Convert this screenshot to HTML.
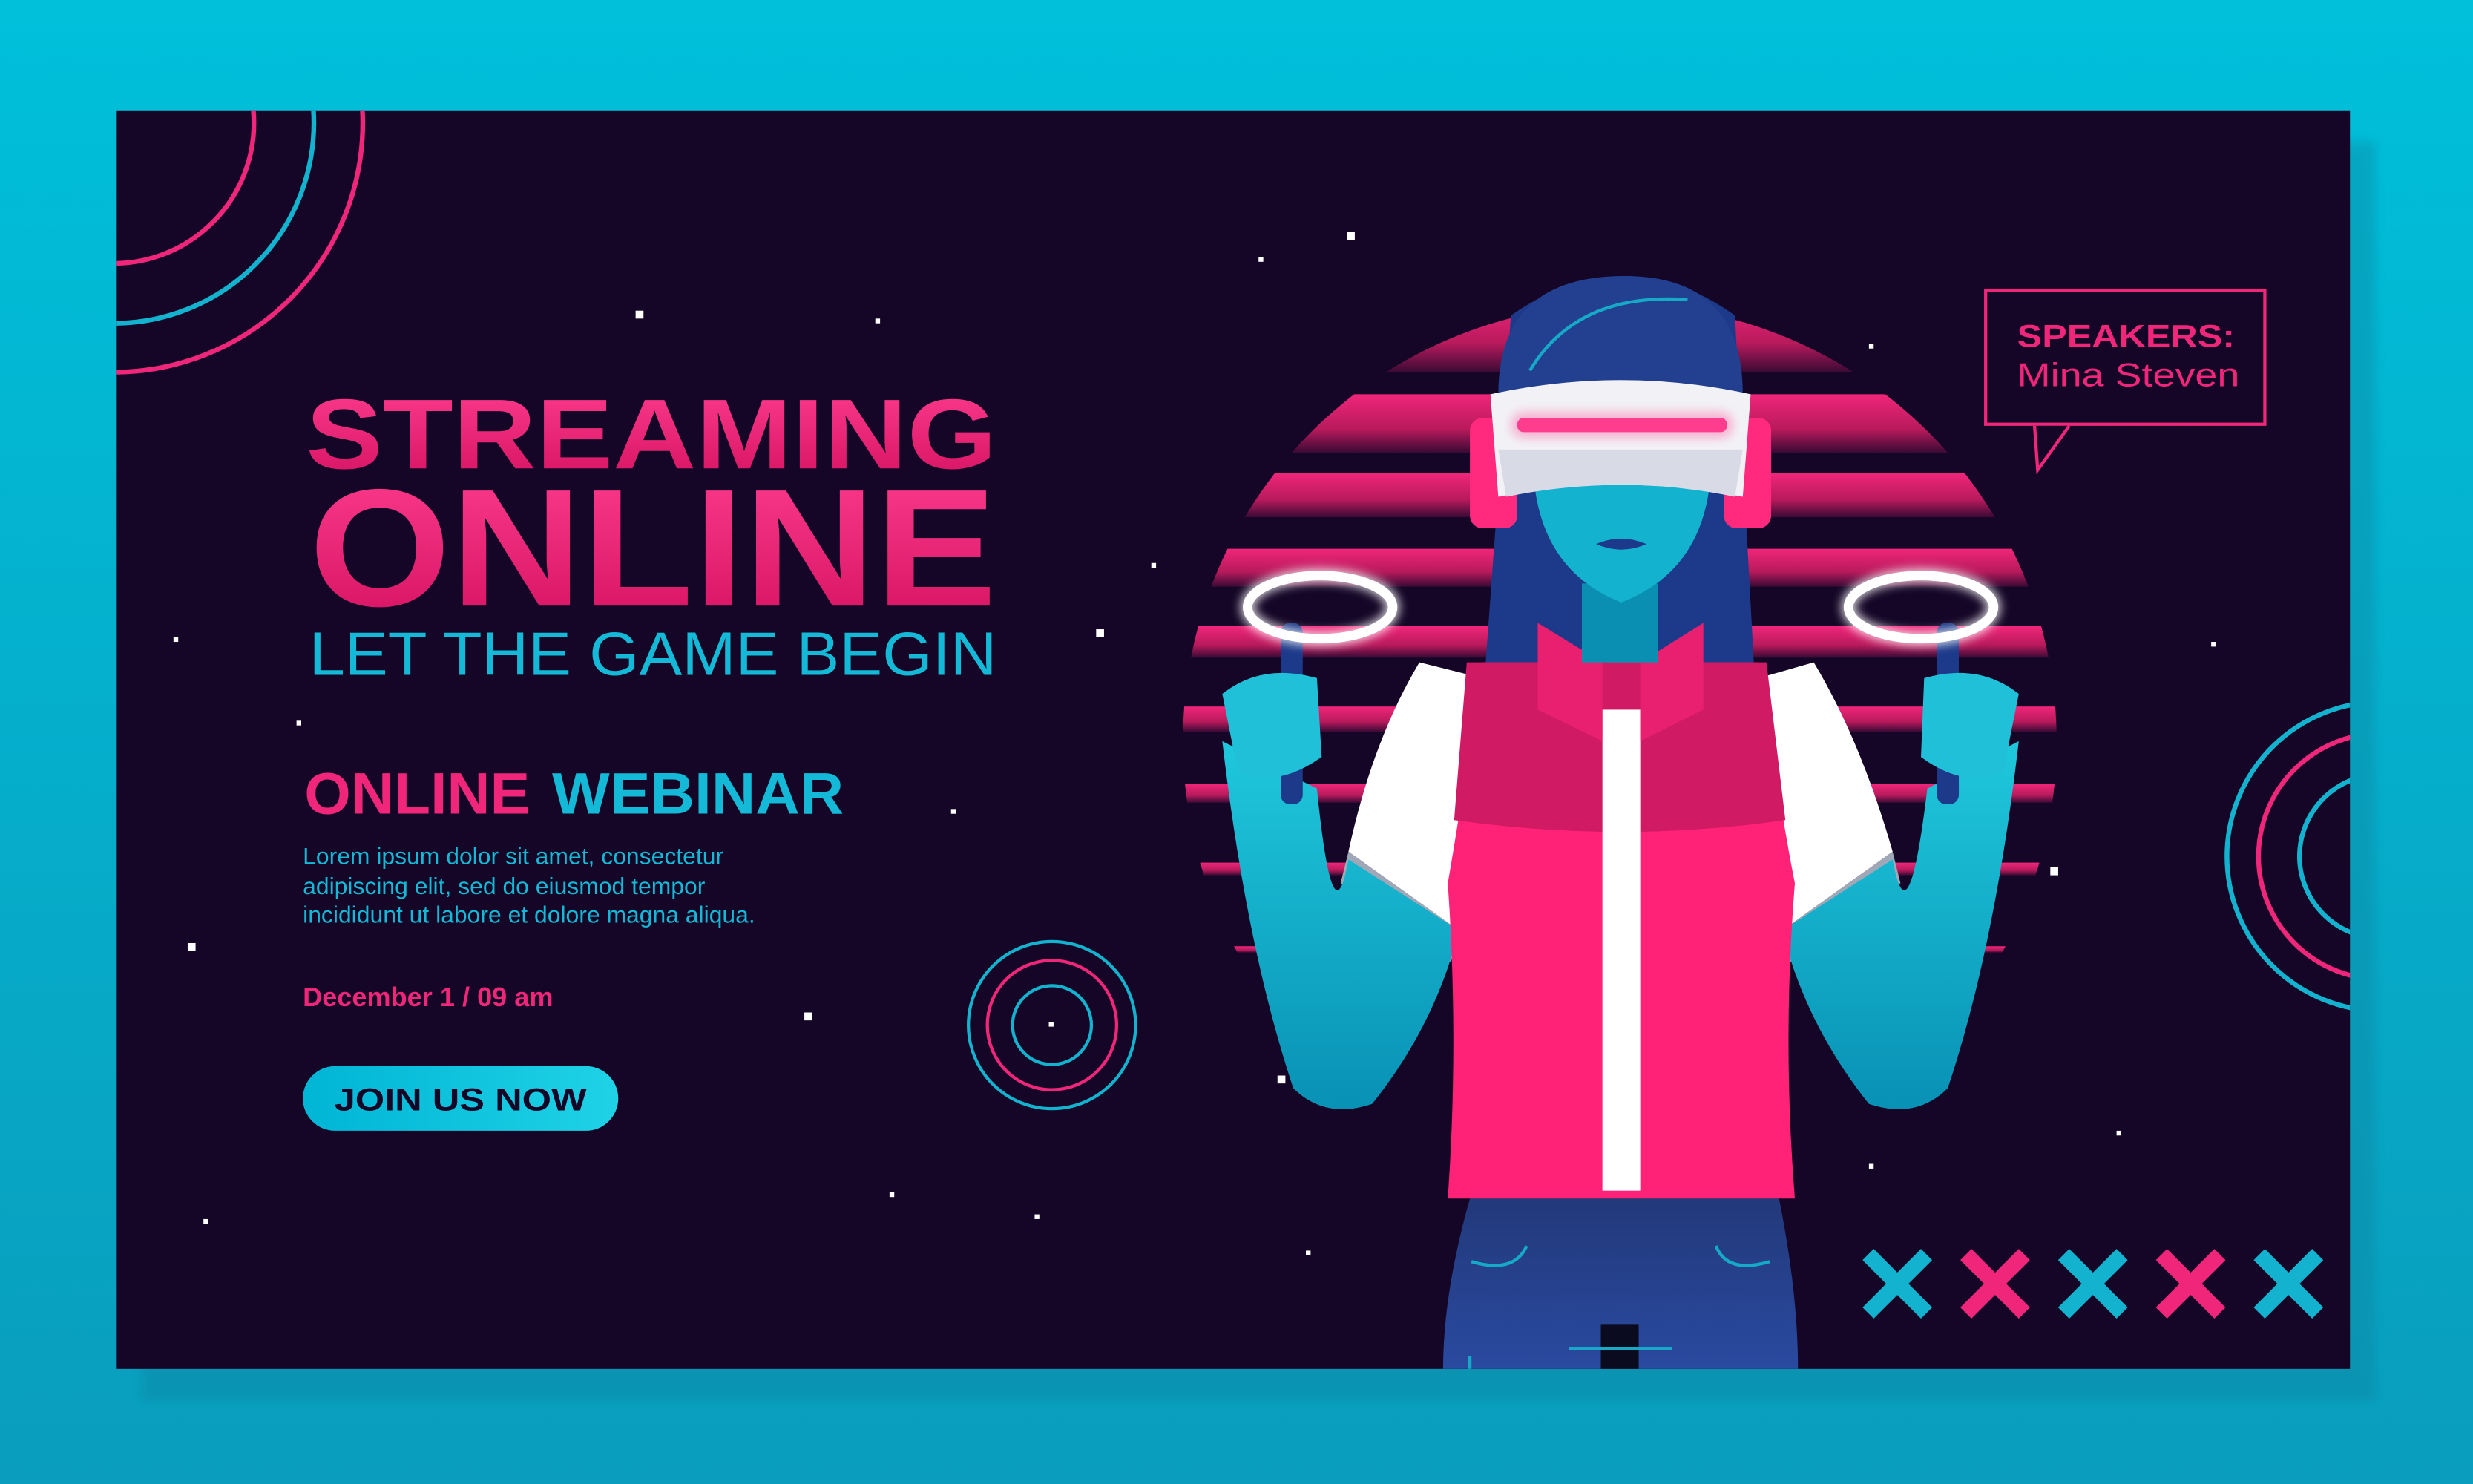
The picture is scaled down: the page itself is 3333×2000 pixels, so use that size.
<!DOCTYPE html>
<html><head><meta charset="utf-8"><style>
html,body{margin:0;padding:0;width:3333px;height:2000px;overflow:hidden;background:#00bcd8}
svg{display:block}
text{font-family:"Liberation Sans",sans-serif}
</style></head><body>
<svg width="3333" height="2000" viewBox="0 0 1568 941" preserveAspectRatio="none" xmlns="http://www.w3.org/2000/svg">
<defs>
<linearGradient id="bg" x1="0" y1="0" x2="0" y2="1"><stop offset="0" stop-color="#00c0da"/><stop offset="1" stop-color="#0a9dbd"/></linearGradient>
<linearGradient id="pk" x1="0" y1="0" x2="0" y2="1"><stop offset="0" stop-color="#ff3d8f"/><stop offset="1" stop-color="#d3105f"/></linearGradient>
<linearGradient id="tl" x1="0" y1="0" x2="1" y2="0"><stop offset="0" stop-color="#1aa9c9" stop-opacity="0"/><stop offset="0.4" stop-color="#1790b8"/><stop offset="1" stop-color="#1a98c0"/></linearGradient>
<linearGradient id="pl" x1="0" y1="0" x2="1" y2="0"><stop offset="0" stop-color="#e0206a"/><stop offset="0.6" stop-color="#b01a5a"/><stop offset="1" stop-color="#5a1040" stop-opacity="0"/></linearGradient>
<linearGradient id="sun" x1="0" y1="0" x2="0" y2="1"><stop offset="0" stop-color="#f0267a"/><stop offset="0.6" stop-color="#b81a5c"/><stop offset="1" stop-color="#3a0a35"/></linearGradient>
<linearGradient id="btn" x1="0" y1="0" x2="1" y2="0"><stop offset="0" stop-color="#00b5d5"/><stop offset="1" stop-color="#1fd2e6"/></linearGradient>
<linearGradient id="arm" x1="0" y1="0" x2="0" y2="1"><stop offset="0" stop-color="#1fc8dc"/><stop offset="1" stop-color="#0891b5"/></linearGradient>
<linearGradient id="pants" x1="0" y1="0" x2="0" y2="1"><stop offset="0" stop-color="#22397a"/><stop offset="1" stop-color="#2a4aa0"/></linearGradient>
<clipPath id="ban"><rect x="74" y="70" width="1416" height="798"/></clipPath>
<clipPath id="sunc"><circle cx="1027" cy="470" r="277"/></clipPath>
<filter id="glow" x="-50%" y="-50%" width="200%" height="200%"><feGaussianBlur stdDeviation="3"/></filter>
</defs>
<rect width="1568" height="941" fill="url(#bg)"/>
<rect x="90" y="90" width="1416" height="798" fill="#0a7f9c" opacity="0.35" filter="url(#glow)"/>
<rect x="74" y="70" width="1416" height="798" fill="#150627"/>
<g clip-path="url(#ban)">
 <g stroke="url(#tl)" stroke-width="2.2">
  <line x1="330" y1="86" x2="1490" y2="86"/><line x1="330" y1="91.5" x2="1490" y2="91.5"/><line x1="330" y1="97" x2="1490" y2="97"/><line x1="330" y1="102.5" x2="1490" y2="102.5"/><line x1="330" y1="108" x2="1490" y2="108"/><line x1="330" y1="113.5" x2="1490" y2="113.5"/><line x1="330" y1="119" x2="1490" y2="119"/><line x1="330" y1="124.5" x2="1490" y2="124.5"/><line x1="330" y1="130" x2="1490" y2="130"/>
 </g>
 <g stroke="url(#pl)" stroke-width="2.2">
  <line x1="74" y1="777" x2="910" y2="777"/><line x1="74" y1="782.5" x2="910" y2="782.5"/><line x1="74" y1="788" x2="910" y2="788"/><line x1="74" y1="793.5" x2="910" y2="793.5"/><line x1="74" y1="799" x2="910" y2="799"/><line x1="74" y1="804.5" x2="910" y2="804.5"/><line x1="74" y1="810" x2="910" y2="810"/><line x1="74" y1="815.5" x2="910" y2="815.5"/><line x1="74" y1="821" x2="910" y2="821"/>
 </g>
 <g fill="none" stroke-width="3">
  <circle cx="72" cy="78" r="89" stroke="#f0267a"/>
  <circle cx="72" cy="78" r="127" stroke="#13b3d0"/>
  <circle cx="72" cy="78" r="158" stroke="#f0267a"/>
  <circle cx="1510" cy="543" r="52" stroke="#13b3d0"/>
  <circle cx="1510" cy="543" r="78" stroke="#f0267a"/>
  <circle cx="1510" cy="543" r="98" stroke="#13b3d0"/>
 </g>
 <g fill="none" stroke-width="2">
  <circle cx="667" cy="650" r="53" stroke="#13b3d0"/>
  <circle cx="667" cy="650" r="41" stroke="#f0267a"/>
  <circle cx="667" cy="650" r="25" stroke="#13b3d0"/>
 </g>
 <rect x="665" y="648" width="3" height="3" fill="#fff"/>
 <!-- sun -->
 <g clip-path="url(#sunc)" fill="url(#sun)">
  <rect x="700" y="190" width="660" height="46"/>
  <rect x="700" y="250" width="660" height="37"/>
  <rect x="700" y="300" width="660" height="28"/>
  <rect x="700" y="348" width="660" height="24"/>
  <rect x="700" y="397" width="660" height="20"/>
  <rect x="700" y="448" width="660" height="16"/>
  <rect x="700" y="497" width="660" height="12"/>
  <rect x="700" y="547" width="660" height="8"/>
  <rect x="700" y="600" width="660" height="4"/>
 </g>
 <!-- stars -->
 <g fill="#fff">
  <rect x="854" y="147" width="5" height="5"/><rect x="403" y="197" width="5" height="5"/><rect x="555" y="202" width="3" height="3"/><rect x="798" y="163" width="3" height="3"/>
  <rect x="695" y="399" width="5" height="5"/><rect x="110" y="404" width="3" height="3"/><rect x="188" y="457" width="3" height="3"/><rect x="603" y="513" width="3" height="3"/>
  <rect x="119" y="598" width="5" height="5"/><rect x="510" y="642" width="5" height="5"/><rect x="730" y="357" width="3" height="3"/><rect x="1185" y="218" width="3" height="3"/>
  <rect x="1402" y="407" width="3" height="3"/><rect x="1300" y="550" width="5" height="5"/><rect x="1342" y="717" width="3" height="3"/><rect x="1185" y="738" width="3" height="3"/>
  <rect x="810" y="682" width="5" height="5"/><rect x="656" y="770" width="3" height="3"/><rect x="828" y="793" width="3" height="3"/><rect x="564" y="756" width="3" height="3"/><rect x="129" y="773" width="3" height="3"/><rect x="1128" y="629" width="3" height="3"/>
 </g>
 <!-- figure -->
 <path d="M932 760 Q915 820 915 868 L1140 868 Q1140 820 1128 760 Z" fill="url(#pants)"/>
 <path d="M933 800 Q960 808 968 790 M1122 800 Q1095 808 1088 790 M932 860 L932 868 M1120 860" stroke="#16a9c8" stroke-width="2" fill="none"/>
 <rect x="1015" y="840" width="24" height="28" fill="#0a0b1e"/>
 <line x1="995" y1="855" x2="1060" y2="855" stroke="#16a9c8" stroke-width="2"/>
 <!-- hair back -->
 <path d="M958 200 Q1030 150 1100 200 L1112 420 L942 420 Z" fill="#1d3a8a"/>
 <!-- sleeves -->
 <path d="M900 420 Q870 470 855 540 L925 590 L940 430 Z" fill="#ffffff"/>
 <path d="M1150 420 Q1180 470 1200 540 L1130 590 L1115 430 Z" fill="#ffffff"/>
 <path d="M855 540 L925 590 L920 610 L850 560 Z" fill="#a0a8b8"/>
 <path d="M1200 540 L1130 590 L1135 610 L1205 560 Z" fill="#a0a8b8"/>
 <!-- arms -->
 <path d="M775 470 Q790 600 820 690 Q840 710 870 700 Q910 650 925 590 L855 545 Q845 600 835 500 Z" fill="url(#arm)"/>
 <path d="M1280 470 Q1265 600 1235 690 Q1215 710 1185 700 Q1145 650 1130 590 L1200 545 Q1210 600 1222 500 Z" fill="url(#arm)"/>
 <!-- hands/controllers -->
 <rect x="812" y="395" width="14" height="115" rx="6" fill="#1d3a8a"/>
 <rect x="1228" y="395" width="14" height="115" rx="6" fill="#1d3a8a"/>
 <path d="M775 440 Q800 420 835 430 L838 480 Q810 500 785 490 Z" fill="#1fc0d8"/>
 <path d="M1280 440 Q1255 420 1220 430 L1218 480 Q1245 500 1270 490 Z" fill="#1fc0d8"/>
 <ellipse cx="837" cy="385" rx="46" ry="20" fill="none" stroke="#fff" stroke-width="9" filter="url(#glow)" opacity="0.8"/>
 <ellipse cx="837" cy="385" rx="46" ry="20" fill="none" stroke="#fff" stroke-width="6"/>
 <ellipse cx="1218" cy="385" rx="46" ry="20" fill="none" stroke="#fff" stroke-width="9" filter="url(#glow)" opacity="0.8"/>
 <ellipse cx="1218" cy="385" rx="46" ry="20" fill="none" stroke="#fff" stroke-width="6"/>
 <!-- torso -->
 <path d="M940 420 L1115 420 Q1130 520 1138 560 Q1130 660 1138 760 L918 760 Q925 660 918 560 Q925 520 940 420 Z" fill="#ff2277"/>
 <path d="M930 420 L1120 420 L1132 520 Q1028 535 922 520 Z" fill="#d01a64"/>
 <rect x="1016" y="450" width="24" height="305" fill="#ffffff"/>
 <path d="M975 395 L1016 420 L1016 470 L975 450 Z M1080 395 L1040 420 L1040 470 L1080 450 Z" fill="#e8206f"/>
 <!-- neck & face -->
 <rect x="1003" y="370" width="48" height="50" fill="#0a8fb2"/>
 <path d="M972 290 L1085 290 Q1085 360 1028 382 Q972 360 972 290 Z" fill="#13b3d0"/>
 <path d="M1012 345 Q1028 338 1044 345 Q1028 352 1012 345 Z" fill="#1d3a8a"/>
 <!-- hair top -->
 <path d="M950 250 Q950 175 1030 175 Q1105 175 1105 250 Z" fill="#22408f"/>
 <path d="M970 235 Q1000 185 1070 190" stroke="#16a9c8" stroke-width="2" fill="none"/>
 <!-- headset -->
 <rect x="932" y="265" width="30" height="70" rx="8" fill="#ff2a7d"/>
 <rect x="1093" y="265" width="30" height="70" rx="8" fill="#ff2a7d"/>
 <path d="M945 250 Q1028 232 1110 250 L1105 315 Q1028 300 950 315 Z" fill="#f2f2f6"/>
 <path d="M950 285 L1105 285 L1100 315 Q1028 300 955 315 Z" fill="#d8dae5"/>
 <rect x="962" y="265" width="133" height="9" rx="4" fill="#ff3d8f"/>
 <rect x="958" y="261" width="141" height="17" rx="8" fill="#ff3d8f" opacity="0.35" filter="url(#glow)"/>
 <!-- X marks -->
 <g stroke-width="10" stroke-linecap="square">
  <path d="M1188 799 L1218 829 M1218 799 L1188 829" stroke="#13b3d0"/>
  <path d="M1250 799 L1280 829 M1280 799 L1250 829" stroke="#f0267a"/>
  <path d="M1312 799 L1342 829 M1342 799 L1312 829" stroke="#13b3d0"/>
  <path d="M1374 799 L1404 829 M1404 799 L1374 829" stroke="#f0267a"/>
  <path d="M1436 799 L1466 829 M1466 799 L1436 829" stroke="#13b3d0"/>
 </g>
</g>
<!-- speaker box -->
<rect x="1259" y="184" width="177" height="85" fill="none" stroke="#f0267a" stroke-width="2"/>
<path d="M1290 270 L1292 298 L1312 270" fill="#150627" stroke="#f0267a" stroke-width="2"/>
<text x="1279" y="220" font-size="20" font-weight="bold" fill="#f0267a" textLength="138" lengthAdjust="spacingAndGlyphs">SPEAKERS:</text>
<text x="1279" y="245" font-size="21" fill="#f0267a" textLength="141" lengthAdjust="spacingAndGlyphs">Mina Steven</text>
<!-- headline -->
<text x="194" y="297" font-size="63" font-weight="bold" fill="url(#pk)" textLength="438" lengthAdjust="spacingAndGlyphs">STREAMING</text>
<text x="196" y="384" font-size="106" font-weight="bold" fill="url(#pk)" textLength="436" lengthAdjust="spacingAndGlyphs">ONLINE</text>
<text x="196" y="428" font-size="39" fill="#13b9d6" textLength="436" lengthAdjust="spacingAndGlyphs">LET THE GAME BEGIN</text>
<text x="193" y="516" font-size="37" font-weight="bold" fill="#f0267a" textLength="143" lengthAdjust="spacingAndGlyphs">ONLINE</text>
<text x="350" y="516" font-size="37" font-weight="bold" fill="#13b9d6" textLength="185" lengthAdjust="spacingAndGlyphs">WEBINAR</text>
<g font-size="15" fill="#13b9d6">
<text x="192" y="548">Lorem ipsum dolor sit amet, consectetur</text>
<text x="192" y="567">adipiscing elit, sed do eiusmod tempor</text>
<text x="192" y="585">incididunt ut labore et dolore magna aliqua.</text>
</g>
<text x="192" y="638" font-size="17" font-weight="bold" fill="#f0267a">December 1 / 09 am</text>
<rect x="192" y="676" width="200" height="41" rx="20.5" fill="url(#btn)"/>
<text x="292" y="704" font-size="20" font-weight="bold" fill="#150627" text-anchor="middle" textLength="160" lengthAdjust="spacingAndGlyphs">JOIN US NOW</text>
</svg>
</body></html>
